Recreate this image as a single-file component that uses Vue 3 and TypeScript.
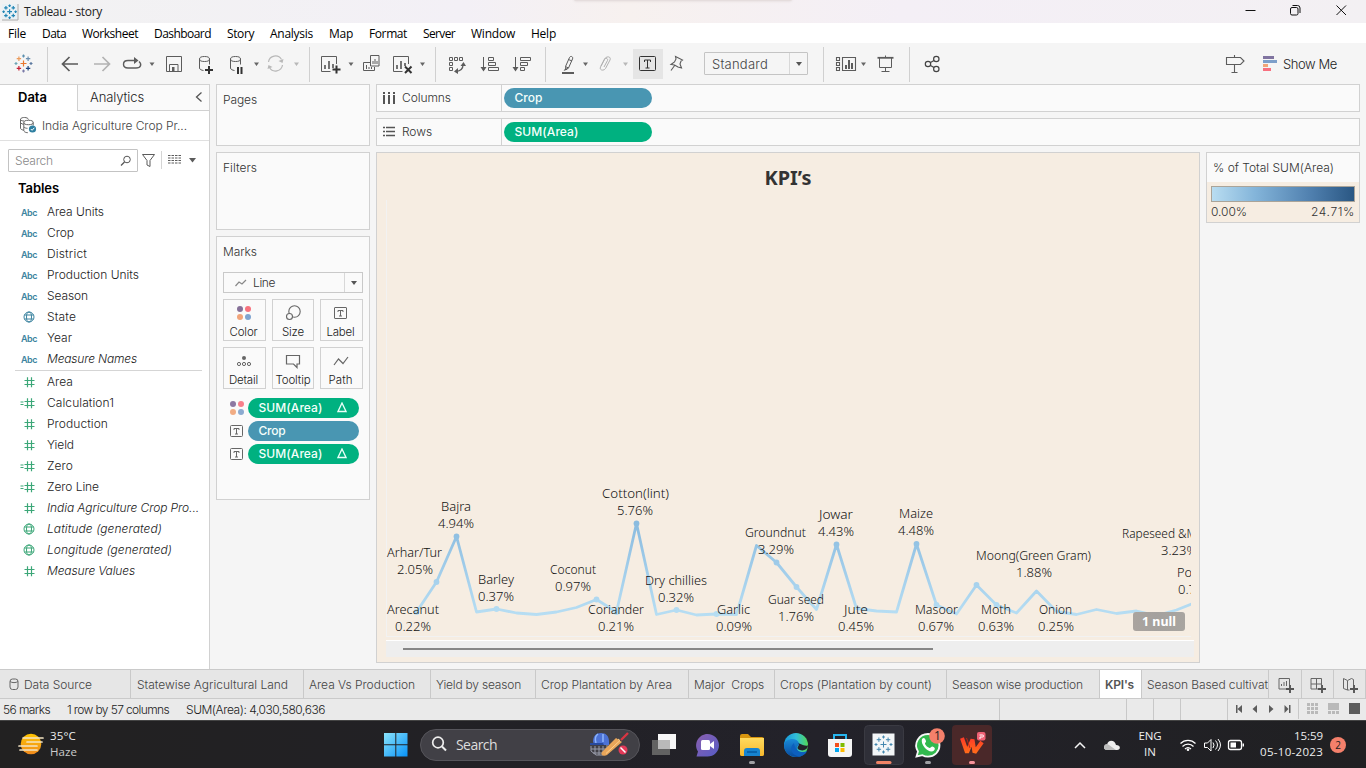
<script setup lang="ts">
interface Field { kind: 'abc' | 'geo' | 'num' | 'calc'; name: string; w: number; italic?: boolean; measure?: boolean }
interface Mark { x: number; y: number; dot?: boolean }
interface Caption { name: string; pct: string; x: number; px: number; y: number; w: number; pw: number }

// Spreads a text run over a given advance width.
const vFit = {
  mounted(el: HTMLElement, binding: { value: number }) {
    const count = (el.textContent ?? '').trim().length
    const natural = el.getBoundingClientRect().width
    if (count > 0) el.style.letterSpacing = `${((binding.value - natural) / count).toFixed(3)}px`
  },
}

const menus = [
  { t: 'File', w: 18, c: 34 }, { t: 'Data', w: 24, c: 40 }, { t: 'Worksheet', w: 56, c: 72 },
  { t: 'Dashboard', w: 57, c: 73 }, { t: 'Story', w: 27, c: 43 }, { t: 'Analysis', w: 43, c: 59 },
  { t: 'Map', w: 24, c: 40 }, { t: 'Format', w: 38, c: 54 }, { t: 'Server', w: 32, c: 48 },
  { t: 'Window', w: 44, c: 60 }, { t: 'Help', w: 25, c: 41 },
]

const dimensions: Field[] = [
  { kind: 'abc', name: 'Area Units', w: 57 },
  { kind: 'abc', name: 'Crop', w: 27 },
  { kind: 'abc', name: 'District', w: 40 },
  { kind: 'abc', name: 'Production Units', w: 92 },
  { kind: 'abc', name: 'Season', w: 41 },
  { kind: 'geo', name: 'State', w: 29 },
  { kind: 'abc', name: 'Year', w: 25 },
  { kind: 'abc', name: 'Measure Names', w: 90, italic: true },
]
const measures: Field[] = [
  { kind: 'num', name: 'Area', w: 26, measure: true },
  { kind: 'calc', name: 'Calculation1', w: 67, measure: true },
  { kind: 'num', name: 'Production', w: 61, measure: true },
  { kind: 'num', name: 'Yield', w: 27, measure: true },
  { kind: 'calc', name: 'Zero', w: 26, measure: true },
  { kind: 'calc', name: 'Zero Line', w: 52, measure: true },
  { kind: 'num', name: 'India Agriculture Crop Pro...', w: 152, italic: true, measure: true },
  { kind: 'geo', name: 'Latitude (generated)', w: 115, italic: true, measure: true },
  { kind: 'geo', name: 'Longitude (generated)', w: 125, italic: true, measure: true },
  { kind: 'num', name: 'Measure Values', w: 88, italic: true, measure: true },
]

const marks: Mark[] = [
  { x: 416.5, y: 612, dot: true }, { x: 436.5, y: 582, dot: true }, { x: 456.5, y: 536.5, dot: true },
  { x: 476.5, y: 612 }, { x: 496.5, y: 609, dot: true }, { x: 516.5, y: 613 }, { x: 536.5, y: 614.5 },
  { x: 556.5, y: 612 }, { x: 576.5, y: 607.5 }, { x: 596.5, y: 599.5, dot: true }, { x: 616.5, y: 612, dot: true },
  { x: 636.5, y: 523.5, dot: true }, { x: 656.5, y: 614.5 }, { x: 676.5, y: 610, dot: true }, { x: 696.5, y: 615 },
  { x: 716.5, y: 614, dot: true }, { x: 736.5, y: 614.5 }, { x: 756.5, y: 545.5 }, { x: 776.5, y: 562.5, dot: true },
  { x: 796.5, y: 587, dot: true }, { x: 816.5, y: 609.5 }, { x: 836.5, y: 544.5, dot: true }, { x: 856.5, y: 608.5 },
  { x: 876.5, y: 611 }, { x: 896.5, y: 612 }, { x: 916.5, y: 544, dot: true }, { x: 936.5, y: 605, dot: true },
  { x: 956.5, y: 614 }, { x: 976.5, y: 585, dot: true }, { x: 996.5, y: 605, dot: true }, { x: 1016.5, y: 613 },
  { x: 1036.5, y: 591 }, { x: 1056.5, y: 611.5 }, { x: 1076.5, y: 614.5 }, { x: 1096.5, y: 609.5 },
  { x: 1116.5, y: 613.5 }, { x: 1136.5, y: 611 }, { x: 1156.5, y: 615.5 }, { x: 1176.5, y: 610 }, { x: 1196.5, y: 602 },
]
const linePoints = marks.map((m) => `${m.x},${m.y}`).join(' ')
const dots = marks.filter((m) => m.dot)

const captions: Caption[] = [
  { name: 'Bajra', pct: '4.94%', x: 441, px: 438, y: 507, w: 30, pw: 36 },
  { name: 'Arhar/Tur', pct: '2.05%', x: 387, px: 397, y: 553, w: 55, pw: 36 },
  { name: 'Arecanut', pct: '0.22%', x: 387, px: 395, y: 610, w: 52, pw: 36 },
  { name: 'Barley', pct: '0.37%', x: 478, px: 478, y: 580, w: 36, pw: 36 },
  { name: 'Coconut', pct: '0.97%', x: 550, px: 555, y: 570, w: 46, pw: 36 },
  { name: 'Cotton(lint)', pct: '5.76%', x: 602, px: 617, y: 494, w: 67, pw: 36 },
  { name: 'Coriander', pct: '0.21%', x: 588, px: 598, y: 610, w: 56, pw: 36 },
  { name: 'Dry chillies', pct: '0.32%', x: 645, px: 658, y: 581, w: 62, pw: 36 },
  { name: 'Garlic', pct: '0.09%', x: 717, px: 716, y: 610, w: 33, pw: 36 },
  { name: 'Groundnut', pct: '3.29%', x: 745, px: 758, y: 533, w: 61, pw: 36 },
  { name: 'Guar seed', pct: '1.76%', x: 768, px: 778, y: 600, w: 56, pw: 36 },
  { name: 'Jowar', pct: '4.43%', x: 819, px: 818, y: 515, w: 34, pw: 36 },
  { name: 'Jute', pct: '0.45%', x: 844, px: 838, y: 610, w: 24, pw: 36 },
  { name: 'Maize', pct: '4.48%', x: 899, px: 898, y: 514, w: 34, pw: 36 },
  { name: 'Masoor', pct: '0.67%', x: 915, px: 918, y: 610, w: 43, pw: 36 },
  { name: 'Moth', pct: '0.63%', x: 981, px: 978, y: 610, w: 30, pw: 36 },
  { name: 'Moong(Green Gram)', pct: '1.88%', x: 976, px: 1016, y: 556, w: 115, pw: 36 },
  { name: 'Onion', pct: '0.25%', x: 1039, px: 1038, y: 610, w: 33, pw: 36 },
  { name: 'Rapeseed &M', pct: '3.23%', x: 1122, px: 1161, y: 534, w: 75, pw: 36 },
  { name: 'Potato', pct: '0.75%', x: 1177, px: 1178, y: 573, w: 38, pw: 36 },
]

const sheets = [
  { t: 'Statewise Agricultural Land', w: 151, c: 173, wide: true },
  { t: 'Area Vs Production', w: 106, c: 127 },
  { t: 'Yield by season', w: 85, c: 105 },
  { t: 'Crop Plantation by Area', w: 131, c: 153 },
  { t: 'Major  Crops', w: 70, c: 86 },
  { t: 'Crops (Plantation by count)', w: 152, c: 172 },
  { t: 'Season wise production', w: 131, c: 153 },
  { t: "KPI's", w: 29, c: 42, active: true },
  { t: 'Season Based cultivat', w: 121, c: 127 },
]
const statusCells = [1000, 127, 27, 27, 47]
const crosses = [
  [0, 0, 3], [-4.6, -4.8, 2.2], [4.6, -4.8, 2.2], [-4.6, 4.8, 2.2], [4.6, 4.8, 2.2],
  [0, -7.5, 1.5], [0, 7.5, 1.5], [-7.5, 0, 1.5], [7.5, 0, 1.5],
]
const crossColors = ['#e8762d', '#eb9b5c', '#6b8fb0', '#c72035', '#1f457e', '#5b8fae', '#7a7aa8', '#6fa5b5', '#5b79a0']
const cross = (c: number[]) => `M${c[0] - c[2]} ${c[1]}h${c[2] * 2}M${c[0]} ${c[1] - c[2]}v${c[2] * 2}`
</script>

<template>
  <div class="desktop">
    <header class="titlebar">
      <svg class="applogo" width="18" height="18" viewBox="0 0 18 18">
        <path d="M1 1h15v15H1z" fill="#e9f1f5" /><path d="M17 1v16H1" fill="none" stroke="#aaa" />
        <g transform="translate(8.6 8.7) scale(.8)"><path v-for="(c, i) in crosses" :key="i" :d="cross(c)" stroke="#2386b5" stroke-width="1.5" /></g>
      </svg>
      <span v-fit="78" class="apptitle">Tableau - story</span>
      <svg class="winctl" width="120" height="23" viewBox="1246 0 120 23" fill="none" stroke="#111">
        <path d="M1245.5 10.5h10" /><rect x="1290.5" y="7.5" width="7.5" height="7.5" rx="1.5" /><path d="M1292.5 5.5h5a2.5 2.5 0 0 1 2.5 2.5v5" /><path d="M1336.5 5.5l9.5 9.5m0-9.5l-9.5 9.5" />
      </svg>
      <div class="snap"></div>
    </header>

    <nav class="menubar">
      <div v-for="m in menus" :key="m.t" class="menu" :style="{ width: m.c + 'px' }"><span v-fit="m.w">{{ m.t }}</span></div>
    </nav>

    <div class="toolbar">
      <svg width="704" height="41" viewBox="0 43 704 41" fill="none" stroke="#5c5c5c">
        <g transform="translate(23.5 63.5)"><path v-for="(c, i) in crosses" :key="i" :d="cross(c)" :stroke="crossColors[i]" stroke-width="1.2" /></g>
        <path d="M47.5 47v35M309.5 47v35M435.5 47v35M545.5 47v35" stroke="#d0d0d0" />
        <path d="M78 64H63M69.5 57l-7 7 7 7" stroke="#5a5a5a" stroke-width="1.7" />
        <path d="M94 64h15M102.5 57l7 7-7 7" stroke="#b2b2b2" stroke-width="1.7" />
        <path d="M137 60.5h-9c-6 0-6 7.5 0 7.5h8c5 0 6-4 3-6.5" stroke-width="1.4" /><path d="M134 57l4.5 3.500-4.500 3.500z" fill="#5c5c5c" stroke="none" />
        <path d="M166.500 56.500h15v15h-15zM169.500 71v-6.500h8.500v6.500" />
        <path d="M172 67h2.500v4H172z" fill="#5c5c5c" stroke="none" />
        <ellipse cx="204.500" cy="59" rx="5" ry="2.500" /><path d="M199.500 59v9c0 1.500 2 2.200 4 2.500M209.500 59v5.500" />
        <path d="M209 66v8M205 70h8" stroke="#333" stroke-width="2" />
        <ellipse cx="235.500" cy="59" rx="5" ry="2.500" /><path d="M230.500 59v9c0 1.500 2 2.200 4 2.500M240.500 59v5.500" />
        <path d="M238 67v7M241.500 67v7" stroke="#333" stroke-width="2" />
        <g stroke="#b8b8b8" stroke-width="1.2"><path d="M268.500 62a7 7 0 0 1 13-2.500M282.500 65a7 7 0 0 1-13 2.500" /><path d="M283.500 59l-1 4-4-2zM267.500 69l1-4 4 2z" fill="#b8b8b8" stroke="none" /></g>
        <path d="M336.500 64v-7.500h-15v15h9" /><path d="M325 69v-4M329 69v-8M333 68v-4" stroke-width="1.7" /><path d="M336.500 65.500v8M332.500 69.500h8" stroke="#333" stroke-width="2" />
        <path d="M370 62.500h-6.500v8h11v-3.500M370.500 55.500h8.500v10.500h-8.500zM366.500 65v4M369 67v2M371.500 67v2M373 64v-3M375 64v-5M377 64v-3" />
        <path d="M408.500 64v-7.500h-15v15h9" /><path d="M397 69v-4M401 69v-8M405 66v-3" stroke-width="1.7" /><path d="M405 66.500l6.500 6.500m0-6.500L405 73" stroke="#333" stroke-width="2" />
        <path d="M449.500 57.500h3v3h-3zM454.500 57.500h3v3h-3zM459.500 57.500h3v3h-3zM449.500 62.500h3v3h-3zM449.500 67.500h3v3h-3z" /><path d="M463 65c0 4-3 6-7 6.500" stroke-width="1.3" /><path d="M460.500 66l3-4 2.500 4zM458 68l-4 3.500 4 2.500z" fill="#5c5c5c" stroke="none" />
        <path d="M483.500 57v11M488.500 57.500h5v3h-5zM488.500 62.500h7v3h-7zM488.500 67.500h10v3h-10zM515.500 57v11M520.500 57.500h10v3h-10zM520.500 62.500h7v3h-7zM520.500 67.500h4v3h-4z" /><path d="M480.500 67h6l-3 4.500zM512.500 67h6l-3 4.500z" fill="#5c5c5c" stroke="none" />
        <path d="M565.500 66.500l4-9c1-2 4-1 3 1.500l-4 9-2.500 1.500zM565.500 66.500l3 1.500M568.500 59.500l3.500 1.500" /><path d="M563.500 71l2-3 2 1.500zM562 72h12v2h-12z" fill="#5c5c5c" stroke="none" />
        <path d="M601 66l3.500-7c1.500-3 7-3 5.500 1l-4.500 8.500c-2 3-6.500 1.500-5-1.500l4-7.500c1-2 4-1 3 1l-3.500 6.500" stroke="#b0b0b0" />
        <path d="M633 49h30v30h-30z" fill="#e5e5e5" stroke="none" /><rect x="639.500" y="56.500" width="16" height="14" rx="1" stroke="#333" /><path d="M644.500 62v-2h6v2M647.500 60v8M645.500 68h4" stroke="#333" />
        <path d="M675.500 56.500l7 3.500-1.500 1-1 3 1.500 4-3.500-1-3.500-2-3.500-.5 3.500-2.500 1.500-3zM675 65l-4 5.500" stroke-width="1.100" />
        <g fill="#666" stroke="none"><path d="M149.500 62.500h5l-2.500 3.500zM254 62.500h5l-2.500 3.500zM348.500 62.500h5l-2.500 3.500zM420 62.500h5l-2.500 3.500zM583 62.500h5l-2.500 3.500z" /><path d="M294 62.500h5l-2.500 3.500zM623 62.500h5l-2.500 3.500z" fill="#b8b8b8" /></g>
      </svg>
      <div class="fitselect"><span v-fit="56">Standard</span><i class="caret"></i></div>
      <svg width="150" height="41" viewBox="808 43 150 41" fill="none" stroke="#5c5c5c">
        <path d="M823.500 47v35M909.500 47v35" stroke="#d0d0d0" />
        <path d="M836.500 57.500h3v3h-3zM836.500 62.500h3v3h-3zM836.500 67.500h3v3h-3zM842.500 57.500h13v13h-13z" stroke-width="1.100" /><path d="M846 69v-4M849 69v-9M852 69v-6" stroke-width="2" />
        <path d="M861 62.500h5l-2.500 3.500z" fill="#666" stroke="none" />
        <path d="M879.500 58v9.500h12V58M885.500 67v4.500M881.500 71.500h8M885.500 55.500v2" /><path d="M877.500 57.800h16" stroke-width="1.800" />
        <g stroke="#444" stroke-width="1.200"><circle cx="928" cy="64" r="2.700" /><circle cx="936.300" cy="59" r="2.700" /><circle cx="936.300" cy="69" r="2.700" /><path d="M930.500 62.500l3.500-2M930.500 65.500l3.500 2" /></g>
      </svg>
      <svg class="right-tools" width="60" height="41" viewBox="1220 43 60 41" fill="none" stroke="#5c5c5c">
        <path d="M1226.500 57.500h14l3.500 3.500-3.500 3.500h-14zM1234.500 55v2.500M1234.500 65v7.500M1231.500 72.500h6" stroke-width="1.100" />
        <g stroke="none"><path d="M1263 56h11v3h-11z" fill="#8074a0" /><path d="M1263 60h14v3h-14z" fill="#7d9fca" /><path d="M1263 64h5v3h-5z" fill="#f1a578" /><path d="M1263 68h8v3h-8z" fill="#f8707f" /></g>
      </svg>
      <span v-fit="54" class="showme">Show Me</span>
    </div>

    <main class="work">
      <aside class="side">
        <div class="sidetabs">
          <div class="tab-on"><b v-fit="29">Data</b></div>
          <div class="tab-off"><span v-fit="54">Analytics</span><svg width="8" height="12" viewBox="0 0 8 12"><path d="M6.500 1.500L1.500 6l5 4.500" fill="none" stroke="#555" stroke-width="1.300" /></svg></div>
        </div>
        <div class="source">
          <svg width="18" height="18" viewBox="0 0 18 18" fill="none" stroke="#666"><path d="M9.500 3.500C9 1 2.500 .8 1.500 3v9c0 1 1 2 3 2M1.500 3.500c.5 1.200 2 1.500 3.500 1.500M1.500 7l3 1.500" /><ellipse cx="9.500" cy="6.500" rx="4.700" ry="2.200" /><path d="M4.800 6.500V15c1 1.500 3 1.700 4 1.700M14.200 6.500v3M5 11c1 1 2 1.300 3.500 1.300" /><circle cx="13.500" cy="13" r="3.600" fill="#2e7fa1" stroke="none" /><path d="M11.800 13l1.300 1.300 2.200-2.500" stroke="#fff" /></svg>
          <span v-fit="145">India Agriculture Crop Pr...</span>
        </div>
        <div class="searchrow">
          <div class="find"><span v-fit="38">Search</span><svg width="12" height="12" viewBox="0 0 12 12" fill="none" stroke="#555"><circle cx="7" cy="4.500" r="3.300" /><path d="M4.500 7L1 10.500" stroke-width="1.200" /></svg></div>
          <svg width="60" height="23" viewBox="140 149 60 23" fill="none" stroke="#5b5b5b"><path d="M142.500 154.500h12l-4.500 6v6l-3-1.500v-4.500z" /><path d="M161.500 151v18" stroke="#d5d5d5" /><path d="M168 155.500h13M168 158h13M168 160.500h13M168 163h13" stroke-dasharray="2.500 1" /><path d="M189 158h7l-3.500 4.500z" fill="#5b5b5b" stroke="none" /></svg>
        </div>
        <b v-fit="41" class="tables">Tables</b>
        <div class="fields">
          <template v-for="(group, g) in [dimensions, measures]" :key="g">
            <div v-for="f in group" :key="f.name" class="field" :class="{ italic: f.italic, measure: f.measure }">
              <div class="kind">
                <span v-if="f.kind === 'abc'" v-fit="16" class="abc">Abc</span>
                <svg v-else-if="f.kind === 'geo'" width="12" height="12" viewBox="0 0 12 12" fill="none" stroke="currentColor"><circle cx="6" cy="6" r="5" /><ellipse cx="6" cy="6" rx="2.500" ry="5" /><path d="M1.500 4h9M1.500 8h9" /></svg>
                <svg v-else width="15" height="12" viewBox="0 0 15 12" fill="none" stroke="currentColor" stroke-width="1.200"><path d="M4.500 4.500h10M4.500 8.500h10M7.500 1.200v10M11.500 1.200v10" /><path v-if="f.kind === 'calc'" d="M.5 5h3M.5 7.500h3" /></svg>
              </div>
              <span v-fit="f.w">{{ f.name }}</span>
            </div>
            <hr v-if="g === 0" />
          </template>
        </div>
      </aside>

      <section class="cards">
        <div class="card pages"><span v-fit="34">Pages</span></div>
        <div class="card filters"><span v-fit="34">Filters</span></div>
        <div class="card marks">
          <span v-fit="34">Marks</span>
          <div class="marktype"><svg width="14" height="10" viewBox="0 0 14 10"><path d="M1.500 8l3.500-4 3 2 4-4" fill="none" stroke="#888" stroke-width="1.200" /></svg><span v-fit="22">Line</span><i class="caret"></i></div>
          <div class="markgrid">
            <div class="mk"><svg width="18" height="18" viewBox="0 0 18 18"><circle cx="5" cy="5" r="3" fill="#857098" /><circle cx="13" cy="5" r="3" fill="#f7727e" /><circle cx="5" cy="13" r="3" fill="#f1a47a" /><circle cx="13" cy="13" r="3" fill="#7fa4d0" /></svg><span v-fit="28">Color</span></div>
            <div class="mk mid"><svg width="18" height="18" viewBox="0 0 18 18" fill="none" stroke="#666" stroke-width="1.100"><circle cx="10.500" cy="7.500" r="5.700" /><circle cx="5.500" cy="12.500" r="3" fill="#fafafa" /></svg><span v-fit="22">Size</span></div>
            <div class="mk"><svg width="18" height="18" viewBox="0 0 18 18" fill="none" stroke="#666"><rect x="2.500" y="3.500" width="12" height="11" rx=".5" /><path d="M6 8V6.500h5V8M8.500 6.500v5.500M7 12h3" /></svg><span v-fit="28">Label</span></div>
            <div class="mk"><svg width="18" height="18" viewBox="0 0 18 18" fill="none" stroke="#666"><circle cx="9" cy="6" r="2" fill="#666" stroke="none" /><circle cx="4" cy="12" r="1.600" /><circle cx="9" cy="12" r="1.600" /><circle cx="14" cy="12" r="1.600" /></svg><span v-fit="29">Detail</span></div>
            <div class="mk mid"><svg width="18" height="18" viewBox="0 0 18 18" fill="none" stroke="#666" stroke-width="1.200"><path d="M2.500 3.500h13v8.500h-2.500v3.500L9.500 12h-7z" /></svg><span v-fit="35">Tooltip</span></div>
            <div class="mk"><svg width="18" height="18" viewBox="0 0 18 18" fill="none" stroke="#666" stroke-width="1.200"><path d="M2 13l4.500-6 4.500 4.500L16 5" /></svg><span v-fit="24">Path</span></div>
          </div>
          <div class="encodings">
            <div v-for="(p, i) in ['SUM(Area)', 'Crop', 'SUM(Area)']" :key="i" class="enc">
              <svg v-if="i === 0" width="14" height="16" viewBox="0 0 14 16"><circle cx="3" cy="4" r="3" fill="#8d78a2" /><circle cx="11" cy="4" r="3" fill="#f8808b" /><circle cx="3" cy="12" r="3" fill="#f1ac84" /><circle cx="11" cy="12" r="3" fill="#8baad0" /></svg>
              <svg v-else width="14" height="16" viewBox="0 0 14 16" fill="none" stroke="#666"><rect x=".5" y="2.500" width="12" height="11" rx="1" /><path d="M4 7V5.500h5V7M6.500 5.500v5.500M5 11h3" /></svg>
              <div class="pill" :class="{ dim: p === 'Crop' }"><b v-fit="p === 'Crop' ? 27 : 64">{{ p }}</b><svg v-if="p !== 'Crop'" width="10" height="11" viewBox="0 0 10 11"><path d="M5 1L9 9.500H1z" fill="none" stroke="#e9fff8" stroke-width="1.300" /></svg></div>
            </div>
          </div>
        </div>
      </section>

      <section class="stage">
        <div class="shelf">
          <div class="shelfname"><svg width="14" height="14" viewBox="0 0 14 14"><path d="M2 1v2M7 1v2M12 1v2M2 4v9M7 4v9M12 4v9" stroke="#555" stroke-width="2" /></svg><span v-fit="49">Columns</span></div>
          <div class="pill dim"><b v-fit="28">Crop</b></div>
        </div>
        <div class="shelf">
          <div class="shelfname"><svg width="14" height="14" viewBox="0 0 14 14"><path d="M1 2.500h2M1 6.500h2M1 10.500h2M4 2.500h9M4 6.500h9M4 10.500h9" stroke="#555" stroke-width="1.600" /></svg><span v-fit="30">Rows</span></div>
          <div class="pill"><b v-fit="64">SUM(Area)</b></div>
        </div>
        <div class="viewrow">
          <div class="view">
            <svg width="822" height="509" viewBox="377 153 822 509">
              <defs>
                <linearGradient id="shade" x1="0" y1="522" x2="0" y2="616" gradientUnits="userSpaceOnUse"><stop offset="0" stop-color="#8abbdf" /><stop offset=".6" stop-color="#a5d0ec" /><stop offset="1" stop-color="#b7def3" /></linearGradient>
                <clipPath id="pane"><rect x="386" y="200" width="805" height="438" /></clipPath>
                <linearGradient id="nullbg"><stop offset="0" stop-color="#aaa49f" /><stop offset=".45" stop-color="#a4a19e" /><stop offset="1" stop-color="#a9a5a0" /></linearGradient>
              </defs>
              <path d="M386.500 200v437M386 636.500h805" stroke="#f2f2f2" fill="none" />
              <text class="charttitle" x="764.500" y="185" textLength="47" lengthAdjust="spacingAndGlyphs">KPI’s</text>
              <g clip-path="url(#pane)">
                <polyline :points="linePoints" fill="none" stroke="url(#shade)" stroke-width="2.800" stroke-linejoin="round" />
                <circle v-for="d in dots" :key="d.x" :cx="d.x" :cy="d.y" r="2.900" fill="url(#shade)" />
                <g v-for="c in captions" :key="c.name" class="caption">
                  <text :x="c.x" :y="c.y + 4" :textLength="c.w" lengthAdjust="spacingAndGlyphs">{{ c.name }}</text>
                  <text :x="c.px" :y="c.y + 21" :textLength="c.pw" lengthAdjust="spacingAndGlyphs">{{ c.pct }}</text>
                </g>
              </g>
              <rect x="386" y="640" width="808" height="17" fill="#eee" /><path d="M386 640.500h808" stroke="#fff" /><path d="M403 649h530" stroke="#868686" stroke-width="2" />
              <rect x="1133" y="612" width="52" height="19" rx="3" fill="url(#nullbg)" />
              <text class="nulls" x="1142" y="626" textLength="34" lengthAdjust="spacingAndGlyphs">1 null</text>
            </svg>
          </div>
          <div class="legend">
            <div class="legendtitle"><span v-fit="121">% of Total SUM(Area)</span></div>
            <div class="legendbody"><div class="ramp"></div><div class="ends"><span v-fit="36">0.00%</span><span v-fit="44">24.71%</span></div></div>
          </div>
        </div>
      </section>
    </main>

    <nav class="sheets">
      <div class="sheet datasrc"><svg width="10" height="13" viewBox="0 0 10 13" fill="none" stroke="#666"><rect x="1" y="1" width="8" height="10.500" rx="2.500" /><path d="M1 3.500c2 1.500 6 1.500 8 0" /></svg><span v-fit="68">Data Source</span></div>
      <div v-for="s in sheets" :key="s.t" class="sheet" :class="{ active: s.active, wide: s.wide }" :style="{ width: s.c + 'px' }"><span v-fit="s.w">{{ s.t }}</span></div>
      <svg width="97" height="30" viewBox="1269 670 97 30" fill="none" stroke="#666">
        <path d="M1301.500 670v30M1333.500 670v30M1365.500 670v30" stroke="#c9c9c9" />
        <path d="M1289.500 685v-6.500h-10.500v10.500h8M1281.500 686v-2M1284 686v-4M1286.500 686v-5M1321.500 685v-6.500h-10.500v10.500h7M1311 684h10M1316.500 679v10M1353.500 685v-5.500l-2-1-4 2-4-2v10l4 1.500h2M1347.500 681v9" />
        <path d="M1290 685v8M1286 689h8M1322 685v8M1318 689h8M1354 685v8M1350 689h8" stroke-width="1.900" stroke="#555" />
      </svg>
    </nav>

    <footer class="status">
      <div v-for="(w, i) in statusCells" :key="w + '-' + i" class="statcell" :style="{ width: w + 'px' }">
        <template v-if="i === 0"><span v-fit="47">56 marks</span><span v-fit="102">1 row by 57 columns</span><span v-fit="139">SUM(Area): 4,030,580,636</span></template>
      </div>
      <svg width="138" height="20" viewBox="1228 700 138 20" fill="#5c5c5c">
        <path d="M1236 706h1.500v8H1236zM1242 706v8l-4.500-4zM1257 706v8l-4.500-4zM1269 706v8l4.500-4zM1284.500 706v8l4-4zM1289 706h1.500v8H1289z" /><path d="M1298 700h1v20h-1z" fill="#c8c8c8" />
        <g fill="#b9b9b9"><path d="M1307 704h3v3h-3zM1311 704h3v3h-3zM1315 704h3v3h-3zM1307 708h3v3h-3zM1311 708h3v3h-3zM1315 708h3v3h-3zM1307 712h3v3h-3zM1311 712h3v3h-3zM1315 712h3v3h-3zM1328 704h11v7h-11zM1328 712h3v3h-3zM1332 712h3v3h-3zM1336 712h3v3h-3z" /></g><path d="M1349 704h11v11h-11z" />
      </svg>
    </footer>

    <div class="taskbar">
      <div class="weather">
        <svg width="26" height="24" viewBox="18 732 26 24"><defs><linearGradient id="sun" x2="0" y2="1"><stop stop-color="#ffc400" /><stop offset="1" stop-color="#f08a1d" /></linearGradient></defs><circle cx="31" cy="743" r="10.300" fill="url(#sun)" /><path d="M23 737h20M27 741h15M19 745h18M20 749h17" stroke="#f3e3c2" stroke-width="1.700" stroke-linecap="round" /></svg>
        <div><span v-fit="26" class="temp">35°C</span><span v-fit="27" class="cond">Haze</span></div>
      </div>
      <svg class="start" width="24" height="24" viewBox="0 0 24 24"><defs><linearGradient id="win" x2="1" y2="1"><stop stop-color="#8be4fb" /><stop offset="1" stop-color="#0792f8" /></linearGradient></defs><path d="M0 0h11.300v11.300H0zM12.300 0H23.500v11.300H12.300zM0 12.300h11.300v11.200H0zM12.300 12.300h11.200v11.200H12.300z" fill="url(#win)" /></svg>
      <div class="tasksearch">
        <svg width="16" height="16" viewBox="0 0 16 16" fill="none" stroke="#eee" stroke-width="1.700"><circle cx="7" cy="6.500" r="5.300" /><path d="M11 10.500l4 4" stroke-width="2" /></svg>
        <span v-fit="41">Search</span>
        <svg class="cricket" width="40" height="26" viewBox="589 731 40 26">
          <path d="M593 742c0-6 3-9 8-9s8 3 8 9v3h-14z" fill="#4c72d5" /><path d="M598 734c-3 2-3 6-2 9M603 734v8" stroke="#8eb5fa" stroke-width="1.500" fill="none" /><path d="M590 743h13l1 2h-14z" fill="#284a9d" />
          <path d="M591 746v5l5 4h7l4-5v-5M591 749h15M593 753h13M595 746v8M599 746v9M603 746v9" fill="none" stroke="#9a9dab" />
          <path d="M628 733l-7 7" stroke="#da3542" stroke-width="2.300" /><path d="M616 738l6 4-15 13c-3 2-7 0-5-3z" fill="#e9a65a" /><path d="M618 739l2 1.500-14 13" fill="none" stroke="#ffd28d" /><circle cx="623" cy="750" r="4.500" fill="#e23958" /><path d="M620.500 747.500l5 5" stroke="#fff" stroke-width="1.500" />
        </svg>
      </div>
      <svg class="apps" width="352" height="48" viewBox="640 720 352 48">
        <defs>
          <linearGradient id="folder" x2="0" y2="1"><stop stop-color="#ffda5e" /><stop offset="1" stop-color="#f7b82d" /></linearGradient>
          <linearGradient id="chat" x2="1" y2="1"><stop stop-color="#8a5fae" /><stop offset="1" stop-color="#565cc6" /></linearGradient>
          <linearGradient id="edgeA"><stop stop-color="#1797d9" /><stop offset=".5" stop-color="#31bdda" /><stop offset="1" stop-color="#51d957" /></linearGradient>
          <linearGradient id="edgeB" x2="0" y2="1"><stop stop-color="#1a8ad8" /><stop offset="1" stop-color="#084a9e" /></linearGradient>
          <linearGradient id="wps" x2="0" y2="1"><stop stop-color="#ff3b28" /><stop offset="1" stop-color="#ff6a1a" /></linearGradient>
        </defs>
        <path d="M658 733h18v15h-18z" fill="#f7f7f7" /><path d="M652 739h18v15h-18z" fill="#626262" /><path d="M658 739h12v9h-12z" fill="#b9b9b9" />
        <path d="M707.500 733c6.500 0 11.500 5 11.500 11.300s-5 11.300-11.500 11.300H696.500l1.500-5c-5-8 1-17.600 9.500-17.600z" fill="url(#chat)" /><rect x="701" y="739" width="9" height="10" rx="1.500" fill="#fff" /><path d="M710 743l4-3v8l-4-3z" fill="#fff" />
        <path d="M740 735q0-2 2-2h6l3 3h11q2 0 2 2v15q0 2-2 2h-20q-2 0-2-2z" fill="#d7950e" /><path d="M740 737h24v16q0 2-2 2h-20q-2 0-2-2z" fill="url(#folder)" /><path d="M744 755v-5q0-3 3-3h10q3 0 3 3v5z" fill="#1784d0" /><path d="M747 751h10" stroke="#0864ad" stroke-width="2" />
        <circle cx="796" cy="744" r="12" fill="url(#edgeA)" /><path d="M784 744c1-7 13-8 15-2 1 3-3 3-2 6 2 5 7 4 10 2-2 4-6 6-11 6-7 0-12-5-12-12z" fill="url(#edgeB)" /><path d="M794 742c-5 4-3 11 3 13 4 1 8-1 10-5-4 2-12 2-13-8z" fill="#0d5fbd" /><path d="M798 742c3 2-2 4 0 6 4 3 10 1 10-4-1 2-5 0-10-2z" fill="#222229" />
        <path d="M834 738v-4h12v4" fill="none" stroke="#27b6ef" stroke-width="2" /><path d="M828 738h24v15q0 3-3 3h-18q-3 0-3-3z" fill="#f5f5f5" /><path d="M835 742h4v4h-4z" fill="#f34f1c" /><path d="M840.500 742h4v4h-4z" fill="#7fbc00" /><path d="M835 747h4v4h-4z" fill="#01a6f0" /><path d="M840.500 747h4v4h-4z" fill="#ffba01" />
        <rect x="864.500" y="724.500" width="39" height="39" rx="4" fill="#2f2f38" stroke="#3a3a42" /><path d="M872.500 732.500h22v22h-22z" fill="#f3f6f8" /><g transform="translate(883.500 743.500)"><path v-for="(c, i) in crosses" :key="i" :d="cross(c)" stroke="#4387af" stroke-width="1" /></g>
        <path d="M916.500 755.500l1.500-5c-5-8 1-17.500 10-17.500 6.500 0 11.500 5 11.500 11.300s-5 11.300-11.500 11.300c-2 0-4-.5-5.500-1.400z" fill="#32b94e" stroke="#f7f7f7" stroke-width="1.800" /><path d="M922 738c2-2 3-.5 4 2 .5 1-1.500 2-1 3 1 2 2.500 3 4.500 4 1 .3 2-2 3-1.500 2.500 1 3 2 1.500 4-4 4-14-5-12-11.500z" fill="#fff" />
        <circle cx="937" cy="735" r="7.800" fill="#f4806b" /><text class="badge" x="934" y="739">1</text>
        <rect x="952" y="724" width="40" height="40" rx="4" fill="#4a2829" /><path d="M962 737l5 14.500 5.500-13 2 13L982 741" fill="none" stroke="url(#wps)" stroke-width="4" stroke-linejoin="bevel" /><path d="M966.500 737l3.500 10" fill="none" stroke="#b9261b" stroke-width="1" /><rect x="977" y="731" width="8.500" height="8.500" rx="2" fill="#ef6175" /><path d="M979.500 734h3q1 0 1 1t-1 1h-2.500v2" stroke="#fff" fill="none" />
        <g stroke-width="3" stroke-linecap="round"><path d="M750.500 761.500h3M926.500 761.500h3" stroke="#a0a0a4" /><path d="M877.500 761.500h12.500" stroke="#f18366" /><path d="M970.500 761.500h3" stroke="#f7939c" /></g>
      </svg>
      <svg class="tray1" width="60" height="48" viewBox="1070 720 60 48" fill="none" stroke="#f5f5f5"><path d="M1075 747l5-5 5 5" stroke-width="1.500" /><path d="M1107 749c-4 0-4-5 0-5 1-6 8-5 9 0 5 0 5 5 1 5z" fill="#eee" stroke="none" /><path d="M1104 746c0-3 3-4 5-2l7 5h-10q-2-1-2-3z" fill="#bcbcbc" stroke="none" /></svg>
      <div class="lang"><span v-fit="23">ENG</span><span v-fit="12">IN</span></div>
      <svg class="tray2" width="66" height="48" viewBox="1178 720 66 48" fill="none" stroke="#fff" stroke-width="1.300">
        <path d="M1180.500 742.500a10.500 10.500 0 0 1 15 0M1182.500 745.500a7.500 7.500 0 0 1 11 0M1185 748a4.500 4.500 0 0 1 6 0" /><circle cx="1188" cy="748.800" r="1.300" fill="#fff" stroke="none" />
        <path d="M1204.500 742h3l3.500-3.500v11.500l-3.500-3.500h-3zM1213 741.500q2 2.500 0 5.500M1215.500 739.500q4 4.500 0 9M1218 738q5 6 0 12" stroke-width="1" />
        <rect x="1228.500" y="739.500" width="13" height="9" rx="2" /><path d="M1230.500 741.500h5.500v5h-5.500z" fill="#fff" stroke="none" /><path d="M1243.300 742.500v3" stroke-width="1.500" />
      </svg>
      <div class="clock"><span v-fit="29">15:59</span><span v-fit="63">05-10-2023</span></div>
      <div class="note">2</div>
    </div>
  </div>
</template>

<style>
html, body { margin: 0; overflow: hidden; background: #f5f5f5; }
</style>

<style scoped>
* { box-sizing: border-box; }
svg { display: block; flex: none; }
span, b { white-space: pre; flex: none; }
.desktop { width: 1366px; height: 768px; display: flex; flex-direction: column; overflow: hidden; background: #f5f5f5; color: #222; font-family: "Inter", "Liberation Sans", sans-serif; font-weight: 300; font-size: 12px; }
.titlebar { position: relative; height: 23px; flex: none; display: flex; align-items: center; background: linear-gradient(90deg, #f2f2f2 0, #f3f0f6 34%, #f7f1ef 46%, #f4eff6 66%, #f3f0f3 100%); }
.applogo { margin-left: 1px; }
.apptitle { margin-left: 5px; font: 12px "Open Sans", "Noto Sans", sans-serif; color: #222; }
.winctl { margin-left: auto; overflow: visible; }
.snap { position: absolute; left: 574px; top: -3px; width: 218px; height: 4px; border-radius: 4px; background: #e5dddd; box-shadow: 0 0 3px #ddd4d4; }
.menubar { height: 20px; flex: none; display: flex; align-items: center; background: #fff; padding-left: 8px; font: 12px "Open Sans", "Noto Sans", sans-serif; color: #000; }
.menu { flex: none; display: flex; height: 20px; align-items: center; padding-top: 1px; }
.toolbar { height: 41px; flex: none; display: flex; align-items: center; background: #f5f5f5; }
.fitselect { width: 104px; height: 23px; border: 1px solid #c4c4c4; border-radius: 1px; display: flex; align-items: center; padding-left: 7px; font-size: 13px; color: #444; }
.caret { margin-left: auto; width: 18px; height: 100%; border-left: 1px solid #d8d8d8; flex: none; display: grid; place-items: center; }
.caret::before { content: ""; border: 3.5px solid transparent; border-top: 4px solid #555; border-bottom: 0; }
.right-tools { margin-left: auto; }
.showme { width: max-content; margin-left: 3px; margin-right: 29px; font-size: 13px; }
.work { height: 585px; flex: none; display: flex; }
.side { width: 210px; height: 585px; flex: none; background: #fff; border-right: 1px solid #d1d1d1; border-top: 1px solid #d1d1d1; display: flex; flex-direction: column; }
.sidetabs { display: flex; height: 26px; flex: none; }
.tab-on { width: 77px; display: flex; align-items: center; padding: 0 0 2px 18px; font-size: 13px; color: #000; }
.tab-on b { font-weight: 600; }
.tab-off { flex: 1; display: flex; align-items: center; justify-content: space-between; border-left: 1px solid #d1d1d1; border-bottom: 1px solid #d1d1d1; background: #fafafa; padding: 0 6px 1px 12px; font-size: 13px; }
.source { height: 30px; flex: none; display: flex; align-items: center; padding: 0 0 1px 19px; gap: 5px; border-bottom: 1px solid #e0e0e0; color: #444; }
.searchrow { display: flex; align-items: center; margin: 8px 0 0 8px; gap: 2px; height: 23px; flex: none; }
.find { width: 130px; height: 23px; display: flex; align-items: center; justify-content: space-between; border: 1px solid #c3c3c3; border-radius: 1px; padding: 0 5px 0 6px; color: #888; }
.tables { margin: 7px 0 0 18px; font-size: 13px; line-height: 18px; color: #000; align-self: flex-start; font-weight: 600; }
.fields { margin-top: 4px; }
.field { height: 21px; display: flex; align-items: center; }
.kind { width: 47px; display: flex; align-items: center; justify-content: flex-end; padding-right: 12px; color: #3d84a0; flex: none; font-style: normal; }
.kind .abc { margin-right: -2px; font-size: 9px; font-weight: 600; padding-top: 1px; }
.measure .kind { color: #3ca778; }
.italic { font-style: italic; }
hr { border: 0; border-top: 1px solid #d5d5d5; margin: 1px 7px 0 15px; }
.cards { width: 154px; flex: none; margin-left: 6px; display: flex; flex-direction: column; gap: 6px; }
.card { background: #fafafa; border: 1px solid #d1d1d1; padding: 6px 6px 0; line-height: 17px; color: #333; }
.pages { height: 62px; }
.filters { height: 78px; }
.marks { height: 264px; display: flex; flex-direction: column; align-items: flex-start; }
.marktype { width: 140px; height: 21px; border: 1px solid #c9c9c9; margin-top: 12px; flex: none; display: flex; align-items: center; padding-left: 10px; gap: 5px; }
.markgrid { display: grid; grid-template-columns: 43px 42px 43px; grid-template-rows: 42px 42px; gap: 6px; margin-top: 6px; }
.mk { border: 1px solid #d1d1d1; display: flex; flex-direction: column; align-items: center; padding: 4px 2px 0 0; font-size: 11.5px; line-height: 17px; color: #222; }
.mk.mid { padding-right: 0; }
.mk span { margin-top: 2px; }
.encodings { margin: 9px 0 0 7px; display: flex; flex-direction: column; gap: 3px; }
.enc { display: flex; align-items: center; gap: 4px; height: 20px; }
.enc .pill { width: 111px; }
.pill { width: 148px; height: 20px; border-radius: 10px; background: #00b180; color: #f5fffb; display: flex; align-items: center; justify-content: space-between; padding: 0 12px 1px 10.5px; }
.pill b { font-weight: 500; }
.pill.dim { background: #4996b2; }
.stage { width: 984px; flex: none; margin-left: 6px; }
.shelf { height: 28px; background: #fafafa; border: 1px solid #d1d1d1; margin-bottom: 6px; display: flex; align-items: center; gap: 2px; color: #333; }
.shelfname { width: 125px; height: 26px; flex: none; border-right: 1px solid #d1d1d1; display: flex; align-items: center; padding: 0 0 1px 5px; gap: 6px; }
.viewrow { display: flex; gap: 6px; align-items: flex-start; }
.view { width: 824px; height: 511px; background: #f6ede2; border: 1px solid #d1d1d1; }
.caption text { font: 300 12.5px "Noto Sans", "Open Sans", sans-serif; fill: #111; }
.charttitle { font: 700 19px "Noto Sans", sans-serif; fill: #333; }
.nulls { font: 700 12.5px "Noto Sans", sans-serif; fill: #fff; }
.legend { width: 154px; height: 71px; border: 1px solid #d1d1d1; background: #fafafa; color: #333; }
.legendtitle { height: 29px; padding-left: 6px; line-height: 29px; }
.legendbody { height: 40px; background: #f6ede2; padding: 4px; }
.ramp { height: 16px; border: 1px solid #aaa499; background: linear-gradient(90deg, #b9ddf1, #84b5da 30%, #4f7fae 70%, #2a5783); }
.ends { display: flex; justify-content: space-between; height: 19px; align-items: center; }
.sheets { height: 30px; flex: none; display: flex; background: #e6e6e6; border-top: 1px solid #cacaca; border-bottom: 1px solid #cacaca; color: #444; }
.sheet { flex: none; height: 28px; display: flex; align-items: center; border-right: 1px solid #c9c9c9; padding: 1px 0 0 5px; overflow: hidden; }
.wide { padding-left: 6px; }
.datasrc { width: 131px; gap: 5px; padding-left: 9px; }
.active { background: #fff; padding: 0 0 0 5px; font-weight: 600; color: #555; }
.status { height: 21px; flex: none; display: flex; background: #eaeaea; }
.statcell { flex: none; height: 21px; border-right: 1px solid #c8c8c8; display: flex; align-items: center; gap: 17px; padding-left: 3px; }
.taskbar { height: 48px; flex: none; display: flex; align-items: center; background: linear-gradient(90deg, #222121, #222126 40%, #23222a 60%, #202022); border-top: 1px solid #444; color: #eee; font: 11.5px "Open Sans", "Noto Sans", sans-serif; }
.weather { width: 384px; flex: none; display: flex; gap: 6px; padding-left: 18px; align-items: center; }
.weather div { display: flex; flex-direction: column; align-items: flex-start; line-height: 16px; padding-bottom: 2px; }
.cond { color: #ccc; }
.start { margin-right: 12px; }
.tasksearch { width: 220px; height: 32px; border-radius: 16px; border: 1px solid #56555b; background: #414046; display: flex; align-items: center; padding: 0 10px 1px; gap: 9px; font-size: 14px; flex: none; color: #ddd; }
.cricket { margin-left: auto; }
.tray1 { margin-left: 78px; }
.lang { width: 40px; display: flex; flex-direction: column; align-items: center; line-height: 16px; padding-bottom: 1px; }
.tray2 { margin-left: 8px; }
.clock { width: 79px; display: flex; flex-direction: column; align-items: flex-end; line-height: 16px; flex: none; padding-bottom: 2px; }
.note { width: 16px; height: 16px; border-radius: 50%; background: #f4806b; color: #222; margin-left: 7px; text-align: center; line-height: 16px; font-size: 10px; }
.badge { font: 12px "Open Sans", sans-serif; fill: #222; }
</style>
